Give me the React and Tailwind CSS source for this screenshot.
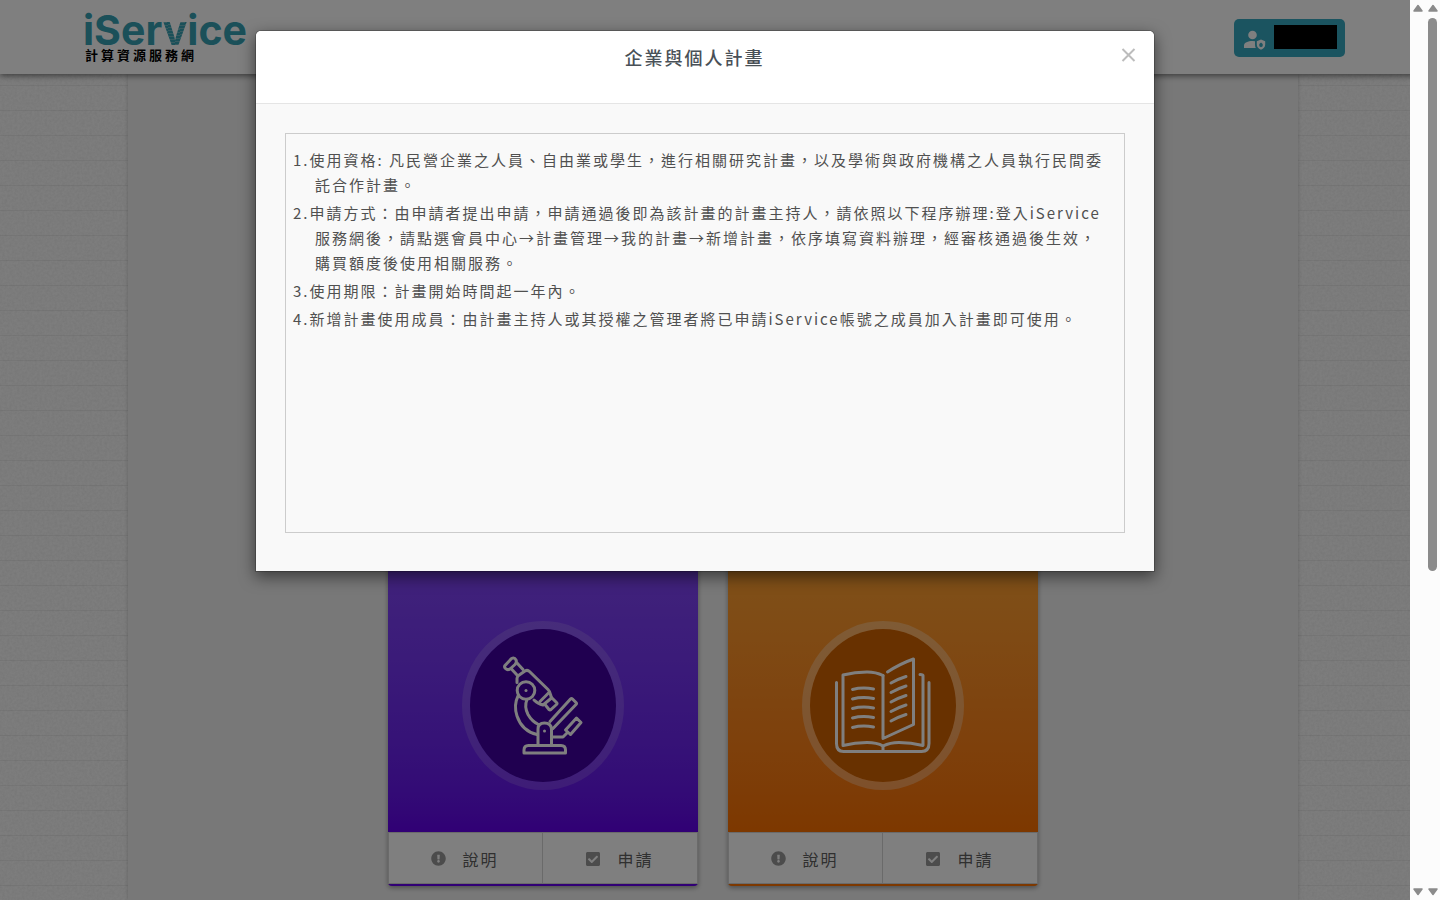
import React from "react";
import { FaExclamationCircle, FaCheckSquare } from "react-icons/fa";

const rules = [
  "1.使用資格: 凡民營企業之人員、自由業或學生，進行相關研究計畫，以及學術與政府機構之人員執行民間委託合作計畫。",
  "2.申請方式：由申請者提出申請，申請通過後即為該計畫的計畫主持人，請依照以下程序辦理:登入iService服務網後，請點選會員中心→計畫管理→我的計畫→新增計畫，依序填寫資料辦理，經審核通過後生效，購買額度後使用相關服務。",
  "3.使用期限：計畫開始時間起一年內。",
  "4.新增計畫使用成員：由計畫主持人或其授權之管理者將已申請iService帳號之成員加入計畫即可使用。",
];

function Microscope() {
  return (
    <svg viewBox="-2 1 190 190" className="h-full w-full" fill="none" stroke="#fff" strokeWidth="3" strokeLinejoin="round" strokeLinecap="round" aria-hidden="true">
      <path d="M55.500 55l6-6.500q3-1.500 4.500 1.500q1 2-1 4.500l-5 4.500q-2.500 1.500-4.500-.5t0-3.500z" />
      <path d="M61 58.500l6 6.500M67 53l6 6.500" />
      <path d="M67 72.500v-4q0-1.500 1.500-3l6.500-4.500q2.500-1.500 4.500.5L98 79.500q2 2 2.500 5l1 3.500-8.500 7q-5-1-9-5" />
      <path d="M99 82.500l-9 9M101.500 87.500l5 5q1 1 0 2l-5.500 5q-1 .8-2 0l-4-5" />
      <circle cx="76" cy="80.500" r="8.800" />
      <circle cx="76" cy="80.500" r="1.500" fill="#fff" stroke="none" />
      <path d="M68 86q-4.500 9-1 20 5 15 20 18.500M77 89.500q-3 7 1 15 4 7 10.500 10" />
      <path d="M88 135v-16q0-6 6.500-6t7 6v16" />
      <circle cx="94.500" cy="121" r="1.500" fill="#fff" stroke="none" />
      <path d="M100 111.500l20.500-22.500q1-1 2 0l3.500 3.500q1 1 0 2l-23 24" />
      <path d="M115.500 120l11-12 4.500 4.500-10.500 12zM117 123l-4 4h-11" />
      <path d="M74 143v-3q0-4.500 4.500-4.500h32.500q4.500 0 4.500 4.500v3z" />
    </svg>
  );
}

function Book() {
  return (
    <svg viewBox="-2 1 190 190" className="h-full w-full" fill="none" stroke="#fff" strokeWidth="3" strokeLinejoin="round" strokeLinecap="round" aria-hidden="true">
      <path d="M46.500 72.500v61q0 8 7 8h78q7.500 0 7.500-8v-61" />
      <path d="M93 65.500q-7-3.500-16-3.500-12 0-24 3v70.500q12-3 24-3 10 0 16 3.500 7-3.500 16-3.500 12 0 24 3V65.500q0-1-3-1" />
      <path d="M93 65.500v63l30.500-14V49q-14 5-26 13M93 136v5" />
      <path d="M62.500 79.500q10-2.500 21-.5M62.500 89q10-2.500 21-.5M62.500 98.500q10-2.500 21-.5M62.500 108q10-2.500 21-.5M62.500 117.500q10-2.500 21-.5" />
      <path d="M101 73q7-4 15-6.500M101 82.500q7-4 15-6.500M101 92q7-4 15-6.500M101 101.500q7-4 15-6.500M101 111q7-4 15-6.500" />
    </svg>
  );
}

function PlanCard({ icon, top, ring, foot }) {
  return (
    <article className={`w-[310px] rounded-sm border-b-2 bg-white shadow-[0_2px_5px_rgba(0,0,0,0.35)] ${foot}`}>
      <div className={`flex justify-center bg-linear-to-b pt-[71px] pb-[42px] ${top}`}>
        <div className={`flex h-[169px] w-[162px] items-center justify-center rounded-[50%] border-8 bg-clip-padding ${ring}`}>
          <div className="size-[190px] shrink-0">{icon}</div>
        </div>
      </div>
      <div className="grid grid-cols-2 divide-x divide-[#d4d4d4] border border-[#d4d4d4]">
        <button type="button" className="flex h-[50px] items-center justify-center gap-4 pt-px text-base tracking-[2px] text-[#606060]">
          <FaExclamationCircle className="size-[15px] text-[#999]" />
          說明
        </button>
        <button type="button" className="flex h-[50px] items-center justify-center gap-4 pt-px text-base tracking-[2px] text-[#606060]">
          <FaCheckSquare className="size-4 text-[#999]" />
          申請
        </button>
      </div>
    </article>
  );
}

function Arrow({ down }) {
  return (
    <svg viewBox="0 0 10 8" className={`h-2 w-[10px] ${down ? "rotate-180" : ""}`} aria-hidden="true">
      <path d="M5 1.500L9 7h-8z" fill="#8b8b8b" stroke="#8b8b8b" strokeWidth="1.500" strokeLinejoin="round" />
    </svg>
  );
}

function ScrollTrack({ thumb }) {
  return (
    <div className="flex w-[15px] shrink-0 flex-col items-center bg-[#fcfcfc] py-1" aria-hidden="true">
      <Arrow />
      <div className="my-[6px] w-[9px] flex-1">
        {thumb && <div className="h-[64%] rounded-full bg-[#8b8b8b]" />}
      </div>
      <Arrow down />
    </div>
  );
}

function PaperGrain() {
  return (
    <svg className="absolute inset-0 h-full w-full opacity-15" aria-hidden="true">
      <filter id="grain">
        <feTurbulence type="fractalNoise" baseFrequency="0.4" numOctaves="3" seed="4" />
        <feColorMatrix values="0 0 0 0 0.4  0 0 0 0 0.4  0 0 0 0 0.4  1.6 0 0 0 -0.5" />
      </filter>
      <rect width="100%" height="100%" filter="url(#grain)" />
    </svg>
  );
}

function Header() {
  return (
    <header className="relative z-10 flex h-[74px] items-start justify-between bg-white pr-20 pl-[83px] shadow-[0_2px_6px_rgba(0,0,0,0.5)]">
      <a href="#home" className="flex flex-col pt-3">
        <span className="font-['Inter',sans-serif] text-[41px] leading-[37px] font-bold text-[#36a0b3]">
          iSer
          <span className="bg-[repeating-linear-gradient(170deg,#36a0b3_0,#36a0b3_2px,#6fb6c3_2px,#6fb6c3_3px)] bg-clip-text text-transparent">v</span>
          ice
        </span>
        <span className="pl-[2px] text-[13px] leading-3 font-bold tracking-[3px] text-black">計算資源服務網</span>
      </a>
      <button type="button" aria-label="會員" className="mt-[19px] flex h-[38px] items-start gap-2 rounded-[5px] bg-[#36a8c0] pt-[6px] pr-2 pl-[9px]">
        <svg viewBox="0 0 23 20" className="mt-[5px] h-5 w-[23px]" fill="#fff" aria-hidden="true">
          <circle cx="9.500" cy="5" r="4.300" />
          <path d="M1 18v-2.500C1 12.500 5 11 9.500 11q1.500 0 2.500.3v3.200q0 2 .8 3.500z" />
          <path fillRule="evenodd" d="M18 9.500l4.200 1.700v3.300q0 3.500-4.200 5.300-4.200-1.800-4.200-5.300v-3.300zM18 12.500l-1.700 1.500v2.200l1.700 1 1.700-1V14z" />
        </svg>
        <span className="h-6 w-[63px] bg-black" />
      </button>
    </header>
  );
}

function PlanDialog() {
  return (
    <section role="dialog" aria-modal="true" aria-labelledby="dialog-title" className="w-full max-w-[900px] overflow-hidden rounded-md rounded-b-none border border-black/20 bg-[#f9f9f9] bg-clip-padding shadow-[0_5px_15px_rgba(0,0,0,0.5)]">
      <div className="flex h-[73px] items-start border-b border-[#e5e5e5] bg-white px-3">
        <h2 id="dialog-title" className="flex-1 pt-[13px] pl-[5px] text-center text-lg leading-[27px] font-medium tracking-[2px] text-[#495057]">
          企業與個人計畫
        </h2>
        <button type="button" aria-label="關閉" className="pt-[11px]">
          <svg viewBox="0 0 26 26" className="size-[26px]" stroke="#bcbcbc" strokeWidth="2" aria-hidden="true">
            <path d="M6.500 7l12 12M18.500 7l-12 12" />
          </svg>
        </button>
      </div>
      <div className="px-[29px] pt-[29px] pb-[38px]">
        <ol className="flex min-h-[400px] flex-col gap-[3px] border border-[#ccc] px-[7px] pt-[13px] pb-[14px] text-[15px] leading-[25px] tracking-[2px] text-[#505050]">
          {rules.map((rule) => (
            <li key={rule} className="pr-[10px] pl-[22px] -indent-[22px]">{rule}</li>
          ))}
        </ol>
      </div>
    </section>
  );
}

export default function App() {
  return (
    <div className="flex h-screen overflow-hidden font-['Noto_Sans_CJK_TC',sans-serif]">
      <div className="relative flex min-w-0 flex-1 flex-col overflow-hidden bg-[#fafafa]">
        <div className="absolute inset-0 bg-[repeating-linear-gradient(to_bottom,transparent_0,transparent_24px,#ececec_24px,#ececec_25px)] bg-[position:0_11px]" />
        <PaperGrain />
        <Header />
        <main className="relative mx-auto flex w-full max-w-[1170px] flex-1 items-start justify-center gap-[30px] bg-[#f1f1f1] pt-[476px] shadow-[0_0_4px_rgba(0,0,0,0.2)]">
          <PlanCard icon={<Microscope />} top="from-[#8448f8] to-[#6200ea]" ring="border-white/15 bg-[#4000a0]" foot="border-[#6200ea]" />
          <PlanCard icon={<Book />} top="from-[#ffa434] to-[#fa7000]" ring="border-white/30 bg-[#d06200]" foot="border-[#fa7000]" />
        </main>
        <div className="absolute inset-0 z-20 flex">
          <div className="flex min-w-0 flex-1 items-start justify-center bg-black/50 pt-[30px]">
            <PlanDialog />
          </div>
          <ScrollTrack />
        </div>
      </div>
      <ScrollTrack thumb />
    </div>
  );
}
